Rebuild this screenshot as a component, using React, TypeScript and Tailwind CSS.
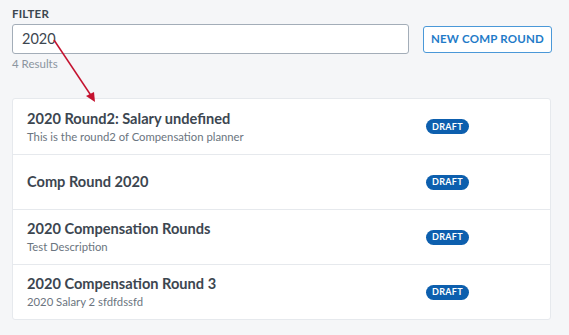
import React from "react";

const rounds = [
  { title: "2020 Round2: Salary undefined", desc: "This is the round2 of Compensation planner" },
  { title: "Comp Round 2020", desc: "" },
  { title: "2020 Compensation Rounds", desc: "Test Description" },
  { title: "2020 Compensation Round 3", desc: "2020 Salary 2 sfdfdssfd" },
];

export default function App() {
  return (
    <div
      className="relative min-h-screen bg-[#f5f6f8] px-3 pt-[6px] text-[#3c4650]"
      style={{ fontFamily: "Lato, 'Noto Sans', sans-serif" }}
    >
      {/* Filter */}
      <label className="block text-[11.5px] font-bold tracking-[0.2px] text-[#3c4650] leading-[14px] pt-[1px]">
        FILTER
      </label>
      <div className="flex items-center gap-[14px] mt-[3px]">
        <div className="flex-1 h-[30px] flex items-center px-[9px] bg-white border border-[#a3adb8] rounded-[3px]">
          <span className="text-[14.5px] text-[#3c4650]">2020</span>
        </div>
        <button className="h-[27px] w-[129px] mr-[5px] flex items-center justify-center whitespace-nowrap bg-white border border-[#4a98d8] rounded-[3px] text-[11.5px] font-bold text-[#1f7bc8] tracking-[0.2px]">
          NEW COMP ROUND
        </button>
      </div>
      <p className="mt-[2px] text-[11.5px] text-[#8b959f] leading-[16px]">4 Results</p>

      {/* List */}
      <div className="mt-[26px] mr-[6px] bg-white border border-[#e6e9ed] rounded-[3px]">
        {rounds.map((r, i) => (
          <div
            key={r.title}
            className={
              "h-[55px] flex items-center pl-[14px] pr-4 " +
              (i > 0 ? "border-t border-[#e6e9ed]" : "")
            }
          >
            <div className="flex-1">
              <div className="text-[14.6px] font-bold leading-[20px] text-[#3c4650]">{r.title}</div>
              {r.desc && (
                <div className="text-[11.3px] leading-[16px] text-[#6b7580]">{r.desc}</div>
              )}
            </div>
            <span className="w-[43px] h-[15px] mr-[65px] flex items-center justify-center rounded-full bg-[#0d5fae] text-[9px] font-bold text-white tracking-[0.3px]">
              DRAFT
            </span>
          </div>
        ))}
      </div>

      {/* Annotation arrow */}
      <svg className="absolute left-0 top-0 pointer-events-none" width="120" height="110">
        <line x1="54" y1="40" x2="92" y2="97" stroke="#c4122f" strokeWidth="1.5" />
        <polygon points="95,102 86,96 94,92" fill="#c4122f" />
      </svg>
    </div>
  );
}
